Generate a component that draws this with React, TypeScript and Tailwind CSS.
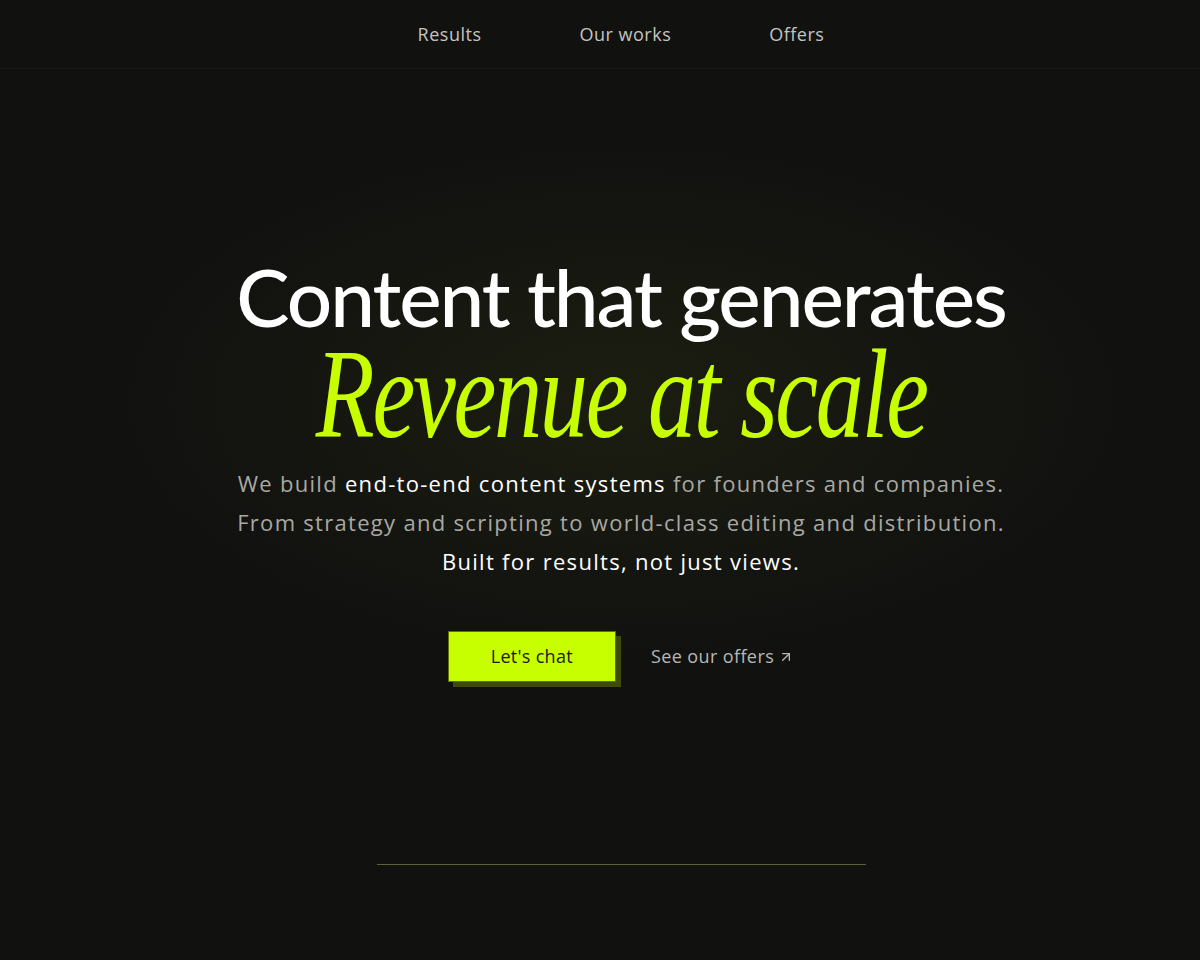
import { ArrowUpRight } from "lucide-react";

const display = "font-['Lato','Inter',sans-serif]";
const body = "font-['Open_Sans','Lato',sans-serif]";

function Nav() {
  return (
    <nav className="h-[69px] border-b border-[#1a1b15] flex items-center justify-center pl-[42px]">
      <div className={`flex items-center gap-[98px] text-[18px] tracking-[0.5px] text-[#c4c4c0] ${body}`}>
        <a href="#results">Results</a>
        <a href="#works">Our works</a>
        <a href="#offers">Offers</a>
      </div>
    </nav>
  );
}

function Hero() {
  return (
    <section className="relative flex flex-col items-center pt-[183px] pl-[42px]">
      {/* soft glow behind headline */}
      <div className="pointer-events-none absolute left-[calc(50%+21px)] top-[50px] h-[560px] w-[1100px] -translate-x-1/2 rounded-full bg-[radial-gradient(ellipse_at_center,rgba(120,140,20,0.10),rgba(17,17,16,0)_65%)]" />
      <h1 className="relative flex flex-col items-center">
        <span className={`text-[80px] leading-[88px] font-medium tracking-[-2px] text-white ${display}`}>
          Content that generates
        </span>
        <span className="mt-[3px] text-[126px] leading-[104px] italic text-[#c8ff00] font-['Liberation_Serif',serif] tracking-[-3px] scale-x-[0.765]">
          Revenue at scale
        </span>
      </h1>
      <p className={`relative mt-[17px] text-center text-[22px] leading-[39px] tracking-[1.3px] text-[#a8a8a4] ${body}`}>
        We build <span className="text-white">end-to-end content systems</span> for founders and companies.
        <br />
        From strategy and scripting to world-class editing and distribution.
        <br />
        <span className="text-white">Built for results, not just views.</span>
      </p>
      <div className={`relative mt-[50px] flex items-center gap-[35px] ${body}`}>
        <button className="h-[51px] w-[168px] bg-[#c8ff00] border border-[#5d7400] text-[18px] tracking-[0.3px] text-[#1a1a12] shadow-[5px_5px_0_#3f4a0c]">
          Let's chat
        </button>
        <a href="#offers" className="flex items-center gap-[4px] text-[18px] tracking-[0.4px] text-[#b8b8b4]">
          See our offers
          <ArrowUpRight size={16} strokeWidth={2} />
        </a>
      </div>
      <div className="mt-[182px] h-px w-[489px] bg-[#5b5f3c]" />
    </section>
  );
}

export default function App() {
  return (
    <div className="min-h-[960px] bg-[#111110] overflow-hidden">
      <Nav />
      <Hero />
    </div>
  );
}
